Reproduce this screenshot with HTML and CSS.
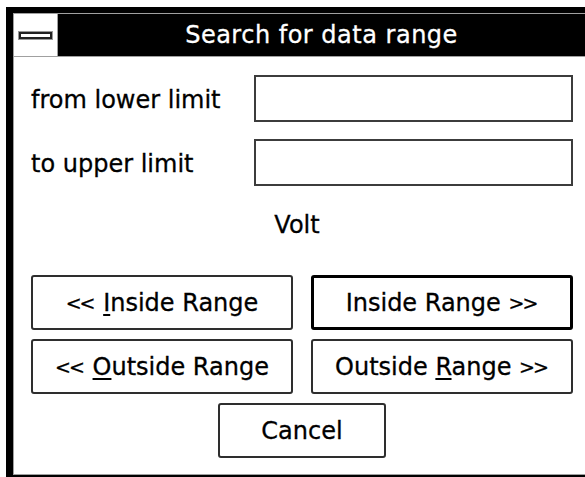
FILE: index.html
```html
<!DOCTYPE html>
<html>
    <head>
        <title>Search for data range</title>
        <link rel="stylesheet" href="styles.css">
    </head>
    <body>
        <div class="window">
            <div class="frame">
                <div class="titlebar">
                    <div class="sysmenu"><span class="sysbar"></span></div>
                    <div class="caption">Search for data range</div>
                </div>
                <div class="content">
                    <div class="fields">
                        <label class="label" for="lower">from lower limit</label>
                        <input type="text" id="lower" class="field">
                        <label class="label" for="upper">to upper limit</label>
                        <input type="text" id="upper" class="field">
                    </div>
                    <div class="unit">Volt</div>
                    <div class="buttons">
                        <button class="btn"><span class="arrows">&lt;&lt;</span> <u>I</u>nside Range</button>
                        <button class="btn default">Inside Range <span class="arrows">&gt;&gt;</span></button>
                        <button class="btn"><span class="arrows">&lt;&lt;</span> <u>O</u>utside Range</button>
                        <button class="btn">Outside <u>R</u>ange <span class="arrows">&gt;&gt;</span></button>
                    </div>
                    <div class="cancel-row">
                        <button class="btn cancel">Cancel</button>
                    </div>
                </div>
            </div>
        </div>
    </body>
</html>
```

FILE: styles.css
```css
body {
    margin: 0;
    background: #fff;
    overflow: hidden;
    font-family: "DejaVu Sans", sans-serif;
    font-size: 24px;
    color: #000;
    -webkit-text-stroke: 0.3px currentColor;
}
.window {
    margin: 7px 0 0 6px;
    width: 572px;
    border: solid #000;
    border-width: 6px 0 7px 7px;
}
.frame {
    border: 1px solid #a0a0a0;
    border-right: none;
    height: 460px;
    display: flex;
    flex-direction: column;
}
.titlebar {
    display: flex;
    height: 42px;
    background: #000;
    border-bottom: 1px solid #a0a0a0;
}
.sysmenu {
    width: 43px;
    background: #fff;
    border-right: 1px solid #a0a0a0;
    display: flex;
    align-items: center;
    justify-content: center;
}
.sysbar {
    display: block;
    width: 29px;
    height: 3px;
    border: 2px solid #222;
    background: #fff;
    box-shadow: 0 0 0 1px #999;
    margin-top: 1px;
}
.caption {
    flex: 1;
    color: #fff;
    text-align: center;
    line-height: 42px;
    letter-spacing: 0.5px;
}
.content {
    flex: 1;
    background: #fff;
    padding: 18px 12px 0 17px;
}
.fields {
    display: grid;
    grid-template-columns: 223px 1fr;
    grid-auto-rows: 47px;
    row-gap: 17px;
    align-items: center;
}
.label {
    padding-top: 2px;
}
.field {
    box-sizing: border-box;
    height: 47px;
    width: 100%;
    margin: 0;
    border: 2px solid #3c3c3c;
    background: #fff;
    outline: none;
}
.unit {
    text-align: center;
    line-height: 26px;
    margin: 26px 10px 37px 0;
}
.buttons {
    display: grid;
    grid-template-columns: 1fr 1fr;
    grid-auto-rows: 55px;
    column-gap: 18px;
    row-gap: 9px;
}
.btn {
    box-sizing: border-box;
    font: inherit;
    color: #000;
    background: #fff;
    border: 2px solid #2e2e2e;
    border-radius: 3px;
    padding: 0;
    margin: 0;
}
.btn.default {
    border: 3px solid #000;
}
.btn u {
    text-underline-offset: 3px;
}
.arrows {
    font-size: 19px;
    letter-spacing: -2px;
    margin-right: 2px;
    vertical-align: 1px;
}
.cancel-row {
    display: flex;
    justify-content: center;
    margin-top: 9px;
}
.cancel {
    width: 168px;
    height: 55px;
}
```
